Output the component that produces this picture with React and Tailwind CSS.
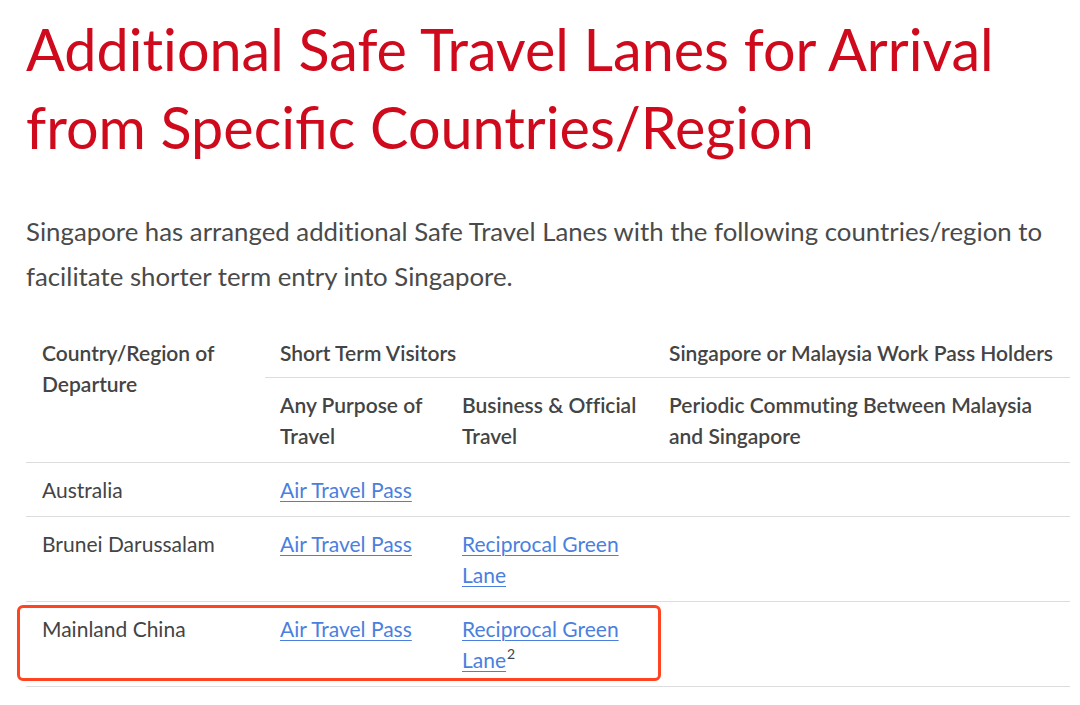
const rows = [
  { country: 'Australia', any: 'Air Travel Pass', business: null },
  { country: 'Brunei Darussalam', any: 'Air Travel Pass', business: 'Reciprocal Green Lane' },
  { country: 'Mainland China', any: 'Air Travel Pass', business: 'Reciprocal Green Lane', note: '2' },
];

function Link({ children }) {
  return (
    <a href="#" className="text-[#4a7fe0] underline underline-offset-[3px] decoration-1">
      {children}
    </a>
  );
}

export default function App() {
  return (
    <div
      className="relative min-h-[705px] w-[1080px] bg-white pt-[10px] pl-[26px] pr-[10px] overflow-hidden [font-variant-ligatures:none]"
      style={{ fontFamily: 'Lato, "Open Sans", sans-serif' }}
    >
      <h1 className="text-[57.5px] leading-[78px] text-[#cf0a1c] font-normal">
        Additional Safe Travel Lanes for Arrival from{' '}
        <span className="[font-variant-ligatures:common-ligatures]">Specific</span> Countries/Region
      </h1>

      <p className="mt-[43px] text-[25.8px] leading-[45px] text-[#4a4a4a]">
        Singapore has arranged additional Safe Travel Lanes with the following countries/region to facilitate shorter
        term entry into Singapore.
      </p>

      <table className="mt-[26px] w-[1044px] border-collapse text-[21px] leading-[31px] text-[#444]">
        <colgroup>
          <col className="w-[239px]" />
          <col className="w-[182px]" />
          <col className="w-[207px]" />
          <col />
        </colgroup>
        <thead className="font-semibold text-left">
          <tr>
            <th rowSpan={2} className="align-top px-4 py-3 font-semibold border-b border-[#ddd]">
              Country/Region of Departure
            </th>
            <th colSpan={2} className="align-top px-[15px] pt-3 pb-[9px] font-semibold border-b border-[#ddd]">
              Short Term Visitors
            </th>
            <th className="align-top px-[15px] pt-3 pb-[9px] font-semibold border-b border-[#ddd]">
              Singapore or Malaysia Work Pass Holders
            </th>
          </tr>
          <tr>
            <th className="align-top px-[15px] py-[11px] font-semibold border-b border-[#ddd]">Any Purpose of Travel</th>
            <th className="align-top px-[15px] py-[11px] font-semibold border-b border-[#ddd]">
              Business &amp; Official Travel
            </th>
            <th className="align-top px-[15px] py-[11px] font-semibold border-b border-[#ddd]">
              Periodic Commuting Between Malaysia and Singapore
            </th>
          </tr>
        </thead>
        <tbody>
          {rows.map((r) => (
            <tr key={r.country} className="border-b border-[#ddd]">
              <td className="align-top px-4 py-[11px]">{r.country}</td>
              <td className="align-top px-[15px] py-[11px]">
                <Link>{r.any}</Link>
              </td>
              <td className="align-top px-[15px] py-[11px]">
                {r.business && <Link>{r.business}</Link>}
                {r.note && (
                  <span className="relative -top-[9px] ml-[1px] text-[14px] leading-none">{r.note}</span>
                )}
              </td>
              <td className="align-top px-[15px] py-[11px]"></td>
            </tr>
          ))}
        </tbody>
      </table>

      <div className="absolute left-[17px] top-[605px] w-[644px] h-[76px] rounded-[6px] border-[3px] border-[#ff4422] pointer-events-none" />
    </div>
  );
}
